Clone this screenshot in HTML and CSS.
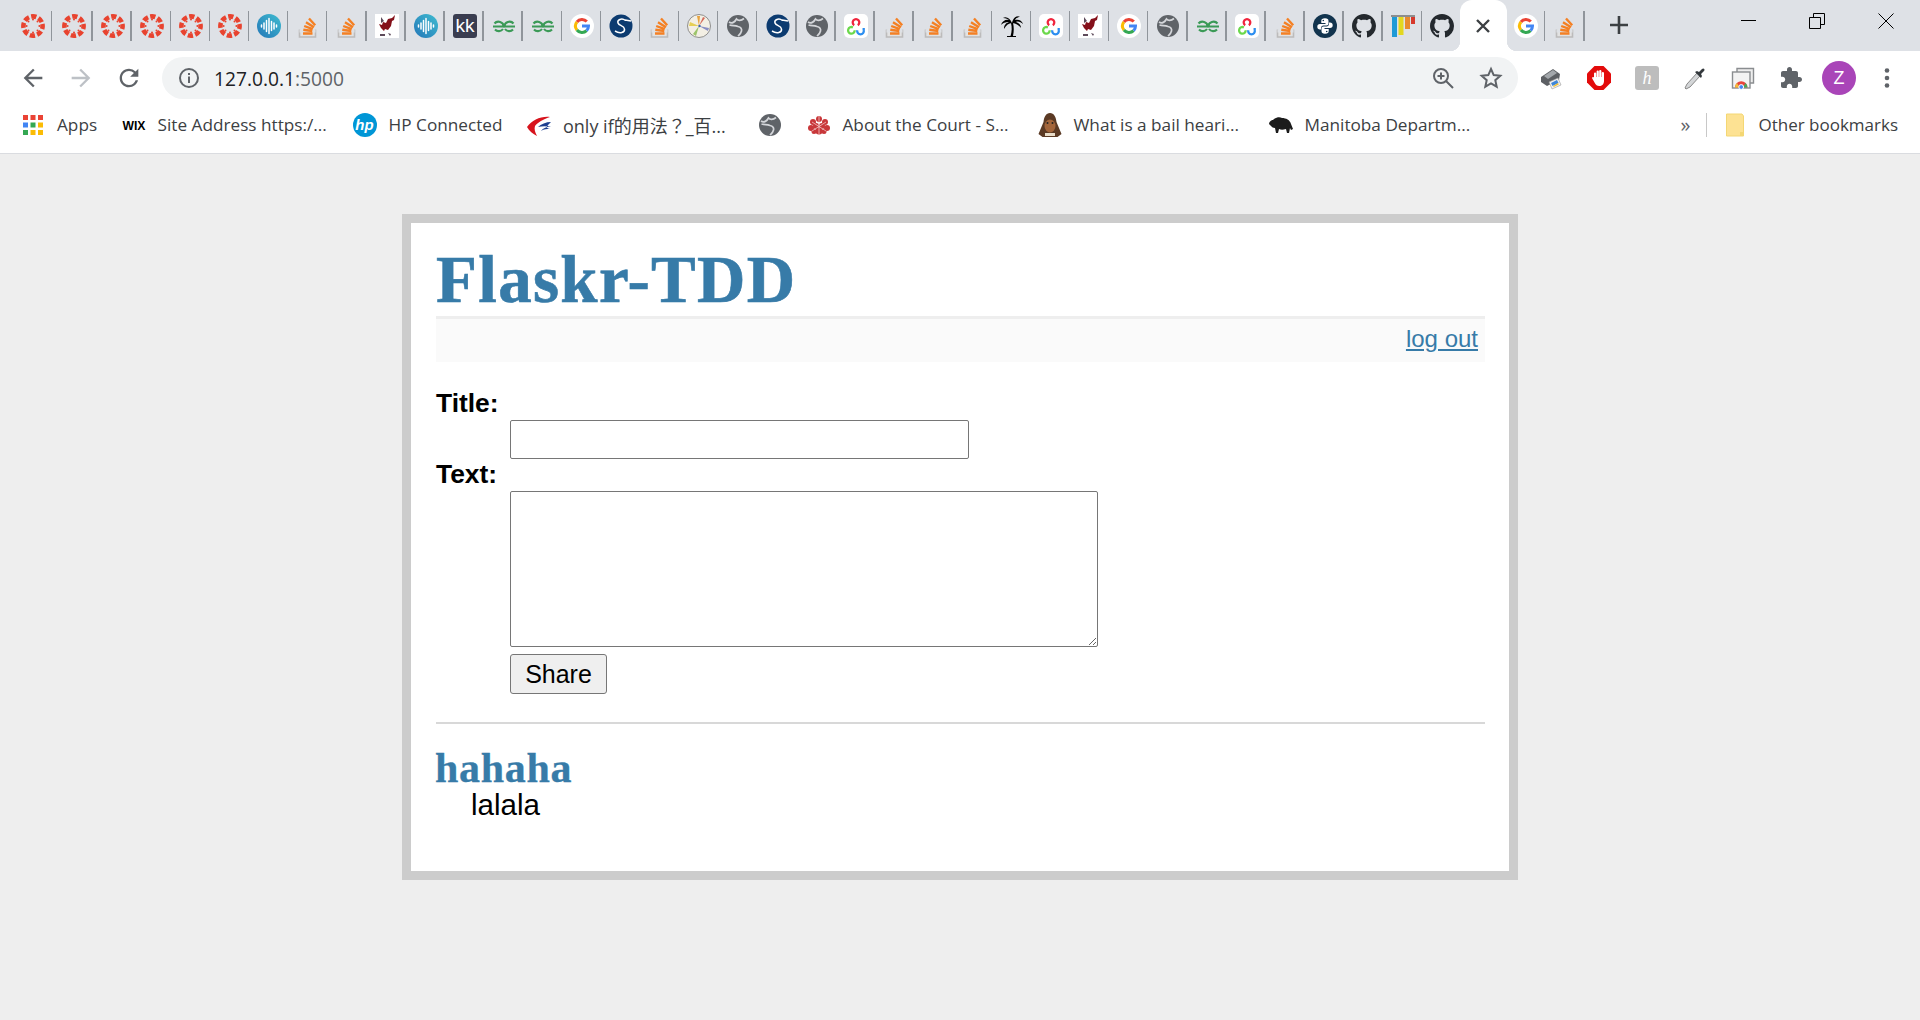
FILE: index.html
```html
<!DOCTYPE html>
<html lang="en">
<head>
    <meta charset="UTF-8">
    <title>Flaskr-TDD</title>
    <link rel="stylesheet" href="styles.css">
</head>
<body>

<svg class="sprites" width="0" height="0">
    <defs>
        <linearGradient id="wave_grad" x1="0" y1="1" x2="1" y2="0">
            <stop offset="0" stop-color="#2477b8"/>
            <stop offset="1" stop-color="#3fbcd0"/>
        </linearGradient>
    </defs>
    <symbol id="i_canvas" viewBox="0 0 24 24">
        <circle cx="12" cy="12" r="9.6" fill="none" stroke="#e8432f" stroke-width="4.6" stroke-dasharray="5.2 2.34" transform="rotate(-12.5 12 12)"/>
        <g fill="#e8432f">
            <circle cx="12" cy="5.6" r="1"/><circle cx="12" cy="18.4" r="1"/><circle cx="5.6" cy="12" r="1"/><circle cx="18.4" cy="12" r="1"/>
            <circle cx="7.5" cy="7.5" r="1"/><circle cx="16.5" cy="7.5" r="1"/><circle cx="7.5" cy="16.5" r="1"/><circle cx="16.5" cy="16.5" r="1"/>
        </g>
    </symbol>
    <symbol id="i_wave" viewBox="0 0 24 24">
        <circle cx="12" cy="12" r="12" fill="url(#wave_grad)"/>
        <path d="M4.5 11v2M7 9v6M9.5 6.5v11M12 4.5v15M14.5 7.5v9M17 9v6M19.5 11v2" stroke="#fff" stroke-width="1.5" stroke-linecap="round"/>
    </symbol>
    <symbol id="i_so" viewBox="0 0 24 24">
        <path d="M3.500 15.500v7.500h16v-7.500" fill="#e2e2e2" stroke="#bcbbbb" stroke-width="1.600"/>
        <rect x="3.500" y="15.500" width="16" height="3" fill="#dee1e6"/>
        <path d="M7 19.500h9.500M7.300 15.800l9 1.200M8.200 12l8.600 3.200M10 8.200l8 5M13 4.500l6.200 6.800" fill="none" stroke="#f48024" stroke-width="2.400"/>
    </symbol>
    <symbol id="i_griffin" viewBox="0 0 24 24">
        <rect width="24" height="24" fill="#fff"/>
        <path d="M20 1l-1 5-2 1-1 5-3 4-3-1-1 2-3-3-2-4 3 1 1-3 3 1 2-4 4-1z" fill="#84101a"/>
        <path d="M6 3l3 4-3 2zM5 20h5v2H5zM13 19l3 1-1 2z" fill="#5d4a5a"/>
    </symbol>
    <symbol id="i_gfg" viewBox="0 0 24 24">
        <g fill="none" stroke="#3b9a57" stroke-width="2.100">
            <path d="M2.500 9.500A5 4.600 0 0 1 11.500 12.500H1M3 15.500A5 4.600 0 0 0 11 15"/>
            <path d="M21.500 9.500A5 4.600 0 0 0 12.500 12.500H23M21 15.500A5 4.600 0 0 1 13 15"/>
        </g>
    </symbol>
    <symbol id="i_g" viewBox="0 0 24 24">
        <circle cx="12" cy="12" r="12" fill="#fff"/>
        <g fill="none" stroke-width="3">
            <path d="M6.900 8A6.500 6.500 0 0 1 16.800 7.600" stroke="#ea4335"/>
            <path d="M6.900 8A6.500 6.500 0 0 0 6.900 16" stroke="#fbbc05"/>
            <path d="M6.900 16A6.500 6.500 0 0 0 16.600 16.600" stroke="#34a853"/>
            <path d="M16.600 16.600A6.500 6.500 0 0 0 18.500 12H12" stroke="#4285f4"/>
        </g>
    </symbol>
    <symbol id="i_scipy" viewBox="0 0 24 24">
        <circle cx="12" cy="12" r="11.500" fill="#0c3b70"/>
        <path d="M16.500 6.500C12.500 3.500 8 6 9 9c1 3 6 2.500 6.500 6 .5 3.500-4.500 5-9.500 2M16 6l6 1" fill="none" stroke="#fff" stroke-width="1.500"/>
    </symbol>
    <symbol id="i_wheel" viewBox="0 0 24 24">
        <circle cx="12" cy="12" r="11.500" fill="#f3efe4" stroke="#777" stroke-width=".8"/>
        <path d="M12 12L10 2l3 0z" fill="#e8a33d"/>
        <path d="M12 12L3 8l-1 4z" fill="#e6cf55"/>
        <path d="M12 12l-6 8 3 2z" fill="#9cc46a"/>
        <path d="M12 12l9 5 1-3z" fill="#8a8fc4"/>
        <path d="M12 12l6-8-2-1z" fill="#d46a5a"/>
        <circle cx="12.500" cy="12" r="1.200" fill="#3a62b0"/>
    </symbol>
    <symbol id="i_globe" viewBox="0 0 24 24">
        <circle cx="12" cy="12" r="11" fill="#5f6368"/>
        <path d="M3 8C6 10 9 8 10.500 5 12 7 15 7 18 4.500M3.500 11C7 12 9 11 12 12.500 15 13 16 15 15.500 17 15 19.500 13 21 12 22" fill="none" stroke="#d4d6da" stroke-width="1.700"/>
    </symbol>
    <symbol id="i_cv" viewBox="0 0 24 24">
        <rect width="24" height="24" rx="5" fill="#fff"/>
        <g fill="none" stroke-width="2.300">
            <path d="M10.200 11.200A3.300 3.300 0 1 1 13.800 11.200" stroke="#f0243c"/>
            <path d="M8.900 13.400A3.300 3.300 0 1 0 10.700 16.300" stroke="#6bd84b"/>
            <path d="M13.300 16.300A3.300 3.300 0 1 0 19.700 16.300M19.700 16.300V14" stroke="#2c8ef0"/>
        </g>
    </symbol>
    <symbol id="i_palm" viewBox="0 0 24 24">
        <path d="M11 9c1 4 1 9-.5 13H7v1h9v-1h-3c1-5 1-9 0-13z"/>
        <path d="M12 9C10 4 6 2 3 4c3 0 5 1 6 2C6 5 2 7 1 11c3-3 6-3 8-3-3 1-5 3-5 7 2-4 5-6 8-6zM12 9c1-5 5-8 8-6-2 0-4 1-5 3 3-1 7 0 8 4-2-2-5-3-7-2 3 1 5 3 5 6-2-3-6-5-9-5z"/>
    </symbol>
    <symbol id="i_python" viewBox="0 0 24 24">
        <circle cx="12" cy="12" r="12" fill="#12344e"/>
        <g id="py_half">
            <path d="M12 4.300C9.300 4.300 8.300 5.300 8.300 7V9H12.500V10H7C5.300 10 4.300 11 4.300 12.700 4.300 14.500 5.300 15.500 7 15.500H8V14C8 12.500 9 11.500 10.500 11.500H13.500C14.800 11.500 15.500 10.800 15.500 9.500V7C15.500 5.300 14.500 4.300 12 4.300Z" fill="#fff"/>
            <circle cx="10.300" cy="6.500" r=".8" fill="#12344e"/>
        </g>
        <use href="#py_half" transform="rotate(180 12 12)"/>
    </symbol>
    <symbol id="i_github" viewBox="0 0 16 16">
        <path fill="#24292e" d="M8 0C3.580 0 0 3.580 0 8c0 3.540 2.290 6.530 5.470 7.590.4.070.55-.17.55-.38 0-.19-.01-.82-.01-1.490-2.010.37-2.530-.49-2.690-.94-.09-.23-.48-.94-.82-1.130-.28-.15-.68-.52-.01-.53.63-.01 1.080.58 1.230.82.72 1.210 1.870.87 2.330.66.07-.52.28-.87.51-1.070-1.780-.2-3.640-.89-3.640-3.950 0-.87.31-1.590.82-2.150-.08-.2-.36-1.020.08-2.120 0 0 .67-.21 2.200.82.64-.18 1.320-.27 2-.27.68 0 1.360.09 2 .27 1.530-1.040 2.200-.82 2.200-.82.44 1.100.16 1.920.08 2.120.51.56.82 1.270.82 2.150 0 3.070-1.870 3.750-3.650 3.950.29.25.54.73.54 1.480 0 1.070-.01 1.930-.01 2.200 0 .21.15.46.55.38A8.013 8.013 0 0016 8c0-4.420-3.580-8-8-8z"/>
    </symbol>
    <symbol id="i_bars" viewBox="0 0 24 24">
        <rect y="1" width="24" height="2" fill="#8e8e8e"/>
        <rect x="1" y="3" width="5" height="20" fill="#1e9ad6"/>
        <rect x="7.500" y="3" width="5" height="18" fill="#e3d71f"/>
        <rect x="14" y="3" width="5" height="12" fill="#e98a2d"/>
        <rect x="20" y="3" width="4" height="7" fill="#d6382b"/>
    </symbol>

    <symbol id="i_back" viewBox="0 0 24 24"><path d="M20 11H7.830l5.590-5.590L12 4l-8 8 8 8 1.410-1.410L7.830 13H20v-2z"/></symbol>
    <symbol id="i_forward" viewBox="0 0 24 24"><path d="M4 11h12.170l-5.590-5.590L12 4l8 8-8 8-1.410-1.410L16.170 13H4v-2z"/></symbol>
    <symbol id="i_reload" viewBox="0 0 24 24"><path d="M17.650 6.350A7.958 7.958 0 0012 4c-4.420 0-7.990 3.580-7.990 8s3.570 8 7.990 8c3.730 0 6.840-2.550 7.730-6h-2.080A5.990 5.990 0 0112 18c-3.310 0-6-2.690-6-6s2.690-6 6-6c1.660 0 3.140.69 4.220 1.780L13 11h7V4l-2.350 2.350z"/></symbol>
    <symbol id="i_puzzle" viewBox="0 0 24 24"><path d="M20.500 11H19V7c0-1.100-.9-2-2-2h-4V3.500C13 2.120 11.880 1 10.500 1S8 2.120 8 3.500V5H4c-1.100 0-1.990.9-1.990 2v3.800H3.500c1.490 0 2.700 1.210 2.700 2.700s-1.210 2.700-2.700 2.700H2V20c0 1.100.9 2 2 2h3.800v-1.500c0-1.490 1.210-2.700 2.700-2.700 1.490 0 2.700 1.210 2.700 2.700V22H17c1.100 0 2-.9 2-2v-4h1.500c1.380 0 2.500-1.120 2.500-2.500S21.880 11 20.500 11z"/></symbol>
</svg>

<div id="tabstrip">
    <div class="tab tab_first"><svg class="fav"><use href="#i_canvas"/></svg></div>
    <div class="tab"><svg class="fav"><use href="#i_canvas"/></svg></div>
    <div class="tab"><svg class="fav"><use href="#i_canvas"/></svg></div>
    <div class="tab"><svg class="fav"><use href="#i_canvas"/></svg></div>
    <div class="tab"><svg class="fav"><use href="#i_canvas"/></svg></div>
    <div class="tab"><svg class="fav"><use href="#i_canvas"/></svg></div>
    <div class="tab"><svg class="fav"><use href="#i_wave"/></svg></div>
    <div class="tab"><svg class="fav"><use href="#i_so"/></svg></div>
    <div class="tab"><svg class="fav"><use href="#i_so"/></svg></div>
    <div class="tab"><svg class="fav"><use href="#i_griffin"/></svg></div>
    <div class="tab"><svg class="fav"><use href="#i_wave"/></svg></div>
    <div class="tab">
        <svg class="fav" viewBox="0 0 24 24">
            <rect width="24" height="24" rx="3" fill="#3a3d50"/>
            <text x="12" y="18" font-family="Liberation Sans, sans-serif" font-size="19" fill="#fff" text-anchor="middle">kk</text>
        </svg>
    </div>
    <div class="tab"><svg class="fav"><use href="#i_gfg"/></svg></div>
    <div class="tab"><svg class="fav"><use href="#i_gfg"/></svg></div>
    <div class="tab"><svg class="fav"><use href="#i_g"/></svg></div>
    <div class="tab"><svg class="fav"><use href="#i_scipy"/></svg></div>
    <div class="tab"><svg class="fav"><use href="#i_so"/></svg></div>
    <div class="tab"><svg class="fav"><use href="#i_wheel"/></svg></div>
    <div class="tab"><svg class="fav"><use href="#i_globe"/></svg></div>
    <div class="tab"><svg class="fav"><use href="#i_scipy"/></svg></div>
    <div class="tab"><svg class="fav"><use href="#i_globe"/></svg></div>
    <div class="tab"><svg class="fav"><use href="#i_cv"/></svg></div>
    <div class="tab"><svg class="fav"><use href="#i_so"/></svg></div>
    <div class="tab"><svg class="fav"><use href="#i_so"/></svg></div>
    <div class="tab"><svg class="fav"><use href="#i_so"/></svg></div>
    <div class="tab"><svg class="fav"><use href="#i_palm"/></svg></div>
    <div class="tab"><svg class="fav"><use href="#i_cv"/></svg></div>
    <div class="tab"><svg class="fav"><use href="#i_griffin"/></svg></div>
    <div class="tab"><svg class="fav"><use href="#i_g"/></svg></div>
    <div class="tab"><svg class="fav"><use href="#i_globe"/></svg></div>
    <div class="tab"><svg class="fav"><use href="#i_gfg"/></svg></div>
    <div class="tab"><svg class="fav"><use href="#i_cv"/></svg></div>
    <div class="tab"><svg class="fav"><use href="#i_so"/></svg></div>
    <div class="tab"><svg class="fav"><use href="#i_python"/></svg></div>
    <div class="tab"><svg class="fav"><use href="#i_github"/></svg></div>
    <div class="tab"><svg class="fav"><use href="#i_bars"/></svg></div>
    <div class="tab tab_nosep"><svg class="fav"><use href="#i_github"/></svg></div>
    <div class="tab tab_active">
        <svg class="fav" viewBox="0 0 24 24"><path d="M6 6l12 12M18 6L6 18" stroke="#3c4043" stroke-width="2.400" fill="none"/></svg>
    </div>
    <div class="tab"><svg class="fav"><use href="#i_g"/></svg></div>
    <div class="tab"><svg class="fav"><use href="#i_so"/></svg></div>
    <svg class="newtab" viewBox="0 0 24 24"><path d="M12 3v18M3 12h18" stroke="#3c4043" stroke-width="2.600" fill="none"/></svg>
    <div id="winctl">
        <svg viewBox="0 0 24 24"><path d="M5 11.500h15" stroke="#000" fill="none"/></svg>
        <svg viewBox="0 0 24 24"><path d="M4.500 8.500h11v11h-11zM8.500 8.500v-4h11v11h-4" stroke="#000" fill="none"/></svg>
        <svg viewBox="0 0 24 24"><path d="M4.500 4.500l15 15M19.500 4.500l-15 15" stroke="#000" fill="none"/></svg>
    </div>
</div>

<div id="toolbar">
    <svg class="btn btn_nav"><use href="#i_back"/></svg>
    <svg class="btn btn_off"><use href="#i_forward"/></svg>
    <svg class="btn btn_nav"><use href="#i_reload"/></svg>
    <div id="omni">
        <svg class="omni_icon" viewBox="0 0 24 24"><circle cx="12" cy="12" r="9" fill="none" stroke="#5f6368" stroke-width="2"/><path d="M12 10.500v6.500M12 7v2" stroke="#5f6368" stroke-width="2"/></svg>
        <span id="url">127.0.0.1<span class="url_port">:5000</span></span>
        <svg class="omni_icon omni_zoom" viewBox="0 0 24 24"><circle cx="10" cy="10" r="7" fill="none" stroke="#5f6368" stroke-width="2"/><path d="M15 15l7 7M10 6.500v7M6.500 10h7" stroke="#5f6368" stroke-width="2" fill="none"/></svg>
        <svg class="omni_icon" viewBox="0 0 24 24"><path d="M12 3l2.700 6.100 6.600.7-5 4.400 1.400 6.500-5.700-3.300-5.700 3.300 1.400-6.500-5-4.400 6.600-.7z" fill="none" stroke="#5f6368" stroke-width="2"/></svg>
    </div>
    <div id="exts">
        <svg class="btn" viewBox="0 0 24 24">
            <path d="M2 11l12-8 7 5-1 6-12 6-6-4z" fill="#5d6064"/>
            <path d="M5 10l9-6 4 3-9 6z" fill="#a3a7ab"/>
            <path d="M10 16l9-4 3 7-9 4z" fill="#f3f3f3" stroke="#999" stroke-width=".6"/>
            <path d="M12 17l6-3 1.500 3-6 3z" fill="#3f86d8"/>
            <path d="M14 20l5-3 .8 1.500-5 2.500z" fill="#f2c037"/>
        </svg>
        <svg class="btn" viewBox="0 0 24 24">
            <path d="M7.500 0h9L24 7.500v9L16.500 24h-9L0 16.500v-9z" fill="#e30b0b"/>
            <path d="M7 13V7.500a1.100 1.100 0 012.200 0V11h.4V5.500a1.100 1.100 0 012.200 0V11h.4V5a1.100 1.100 0 012.200 0v6h.4V7a1.100 1.100 0 012.200 0v8c0 3-2 5-4.700 5-2.300 0-3.500-1-4.500-3l-2.600-4.500c-.5-1 1-2 1.700-1z" fill="#fff"/>
        </svg>
        <svg class="btn" viewBox="0 0 24 24">
            <rect width="24" height="24" rx="3" fill="#bdbdbd"/>
            <text x="12" y="18" font-family="Liberation Serif, serif" font-style="italic" font-size="18" fill="#fff" text-anchor="middle">h</text>
        </svg>
        <svg class="btn" viewBox="0 0 24 24">
            <path d="M14 7l3 3-10 11-4 2-1-1 2-4z" fill="#d4d6d8" stroke="#888" stroke-width="1"/>
            <path d="M12 6l6 6 1-2-1-2 3-3c1.500-1.500-.5-3.500-2-2l-3 3-2-1z" fill="#33383c"/>
        </svg>
        <svg class="btn" viewBox="0 0 24 24">
            <path d="M6 6V2.500h16.500V17H19" fill="#eee" stroke="#8a8d90" stroke-width="1.400"/>
            <rect x="1.500" y="6" width="17.500" height="16" fill="#f3f3f3" stroke="#8a8d90" stroke-width="1.400"/>
            <path d="M4 21.500a6.200 6.200 0 0112.500 0z" fill="#e8453c"/>
            <path d="M4 21.500a6.200 6.200 0 012-4.500l2.500 4.500z" fill="#f2c037"/>
            <path d="M12 21.500l2.500-4.500a6.200 6.200 0 012 4.500z" fill="#4aa657"/>
            <circle cx="10.200" cy="21" r="2.400" fill="#4285f4" stroke="#fff" stroke-width="1"/>
        </svg>
        <svg class="btn btn_nav"><use href="#i_puzzle"/></svg>
        <div class="avatar">Z</div>
        <svg class="btn" viewBox="0 0 24 24"><g fill="#5f6368"><circle cx="12" cy="4.500" r="2.300"/><circle cx="12" cy="12" r="2.300"/><circle cx="12" cy="19.500" r="2.300"/></g></svg>
    </div>
</div>

<div id="bookmarks">
    <div class="bm">
        <svg class="bm_icon" viewBox="0 0 24 24">
            <rect x="2" y="2" width="5" height="5" fill="#ea4335"/><rect x="9.500" y="2" width="5" height="5" fill="#ea4335"/><rect x="17" y="2" width="5" height="5" fill="#ea4335"/>
            <rect x="2" y="9.500" width="5" height="5" fill="#4285f4"/><rect x="9.500" y="9.500" width="5" height="5" fill="#34a853"/><rect x="17" y="9.500" width="5" height="5" fill="#fbbc05"/>
            <rect x="2" y="17" width="5" height="5" fill="#34a853"/><rect x="9.500" y="17" width="5" height="5" fill="#fbbc05"/><rect x="17" y="17" width="5" height="5" fill="#fbbc05"/>
        </svg>
        <span>Apps</span>
    </div>
    <div class="bm bm_long">
        <svg class="bm_icon" viewBox="0 0 24 24"><text x="12" y="16.500" font-family="Liberation Sans, sans-serif" font-weight="700" font-size="13" text-anchor="middle" textLength="23" lengthAdjust="spacingAndGlyphs">WIX</text></svg>
        <span>Site Address https:/...</span>
    </div>
    <div class="bm">
        <svg class="bm_icon" viewBox="0 0 24 24"><circle cx="12" cy="12" r="12" fill="#0096d6"/><text x="11.500" y="17" font-family="Liberation Sans, sans-serif" font-weight="700" font-style="italic" font-size="15" fill="#fff" text-anchor="middle">hp</text></svg>
        <span>HP Connected</span>
    </div>
    <div class="bm bm_long">
        <svg class="bm_icon" viewBox="0 0 24 24">
            <path d="M23 4C14 3 5 7 0 14c2 4 6 7 10 9-2-4-3-7-2-10 3-4 9-7 15-9z" fill="#d7141d"/>
            <path d="M24 9c-5 0-10 2-13 5 4-1 9-1 13-1-4 1-8 2-10 5 3-2 6-2 9-2-3-1-4-1-2-4z" fill="#1d3f8f"/>
        </svg>
        <span class="bm_cjk">only if的用法？_百...</span>
    </div>
    <div class="bm"><svg class="bm_icon"><use href="#i_globe"/></svg></div>
    <div class="bm bm_long">
        <svg class="bm_icon" viewBox="0 0 24 24">
            <g fill="#c8373a">
                <circle cx="12" cy="6" r="3"/><circle cx="6" cy="9" r="3"/><circle cx="18" cy="9" r="3"/><circle cx="4" cy="15" r="3"/><circle cx="20" cy="15" r="3"/><circle cx="9" cy="13" r="3"/><circle cx="15" cy="13" r="3"/><circle cx="12" cy="18" r="3.500"/><circle cx="7" cy="18.500" r="2.500"/><circle cx="17" cy="18.500" r="2.500"/>
            </g>
            <path d="M12 3v18M5 9l14 9M19 9L5 18" stroke="#f3c4c4" stroke-width=".8"/>
        </svg>
        <span>About the Court - S...</span>
    </div>
    <div class="bm bm_long">
        <svg class="bm_icon" viewBox="0 0 24 24">
            <path d="M12 0c4 0 6 4 6.500 9l5 12-4 3H4.500l-4-3 5-12C6 4 8 0 12 0z" fill="#5b3a24"/>
            <ellipse cx="12" cy="13" rx="5.500" ry="6.500" fill="#a3653a"/>
            <path d="M7 20h10v3H7z" fill="#e8dcc8"/>
            <circle cx="9.500" cy="10" r="1" fill="#222"/><circle cx="14.500" cy="10" r="1" fill="#222"/>
        </svg>
        <span>What is a bail heari...</span>
    </div>
    <div class="bm">
        <svg class="bm_icon" viewBox="0 0 24 24">
            <path d="M0 11c0-2 2-4 4-4l1-1c3-2 6-2 8-1 4 0 8 2 9 6l2 5-2 1-1-2-1 5h-2l-1-4c-3 1-5 1-7 0l-1 4H7l-1-5c-2 0-3-1-4-2z" fill="#1b1b1b"/>
        </svg>
        <span>Manitoba Departm...</span>
    </div>
    <div id="bm_more">»</div>
    <div id="bm_sep"></div>
    <div class="bm bm_other">
        <svg class="bm_icon" viewBox="0 0 24 24"><path d="M3.500 1h15.500l1.500 2v20h-17z" fill="#fde293" stroke="#f4d774" stroke-width="1"/><path d="M17 19h3.500v4H17z" fill="#f4d774"/></svg>
        <span>Other bookmarks</span>
    </div>
</div>

<div class="page">
    <h1>Flaskr-TDD</h1>
    <div class="metanav"><a href="#">log out</a></div>
    <form class="add_entry">
        <dl>
            <dt>Title:</dt>
            <dd><input type="text" class="f_title"></dd>
            <dt>Text:</dt>
            <dd><textarea class="f_text"></textarea></dd>
            <dd><input type="submit" class="f_share" value="Share"></dd>
        </dl>
    </form>
    <ul class="entries">
        <li>
            <h2>hahaha</h2>
            <p>lalala</p>
        </li>
    </ul>
</div>

</body>
</html>
```

FILE: styles.css
```css
*{
    padding: 0;
    margin: 0;
    list-style: none;
    box-sizing: border-box;
}
body{
    background-color: #eee;
    font-family: "Liberation Sans", Arial, sans-serif;
    overflow: hidden;
}
.sprites{
    position: absolute;
}

/* tab strip */
#tabstrip{
    display: flex;
    height: 51px;
    padding-left: 13.9px;
    background-color: #dee1e6;
}
.tab{
    position: relative;
    flex: none;
    width: 39.1px;
    display: flex;
    align-items: center;
    justify-content: center;
}
.tab_first{
    margin-right: 1.3px;
}
.tab::after{
    content: "";
    position: absolute;
    right: 0.5px;
    top: 11px;
    bottom: 10px;
    width: 1.5px;
    background-color: #90959b;
}
.tab_nosep::after{
    display: none;
}
.fav{
    width: 24px;
    height: 24px;
}
.tab_active{
    width: 47.2px;
    margin-left: -2px;
    background-color: #fff;
    border-radius: 12px 12px 0 0;
}
.tab_active::before,
.tab_active::after{
    content: "";
    position: absolute;
    top: auto;
    bottom: 0;
    width: 10px;
    height: 10px;
    background-color: transparent;
}
.tab_active::before{
    left: -10px;
    right: auto;
    background-image: radial-gradient(circle at 0 0, transparent 10px, #fff 10.5px);
}
.tab_active::after{
    left: auto;
    right: -10px;
    background-image: radial-gradient(circle at 100% 0, transparent 10px, #fff 10.5px);
}
.newtab{
    flex: none;
    width: 24px;
    height: 24px;
    margin: 13px 0 0 22px;
}
#winctl{
    margin-left: auto;
    padding: 9px 22px 0 0;
    display: flex;
    align-items: flex-start;
    gap: 45px;
}
#winctl svg{
    width: 24px;
    height: 24px;
}

/* toolbar */
#toolbar{
    display: flex;
    align-items: center;
    gap: 20px;
    height: 52px;
    padding: 6px 19px 4px;
    background-color: #fff;
}
.btn{
    flex: none;
    width: 28px;
    height: 28px;
}
.btn_nav{
    fill: #5f6368;
}
.btn_off{
    fill: #bdc1c6;
}
#omni{
    flex: 1;
    height: 42px;
    margin-left: -1px;
    margin-right: -1px;
    padding: 0 15px;
    display: flex;
    align-items: center;
    gap: 13px;
    background-color: #f1f3f4;
    border-radius: 21px;
}
.omni_icon{
    flex: none;
    width: 24px;
    height: 24px;
}
.omni_zoom{
    margin-left: auto;
    margin-right: 11px;
}
#url{
    font-family: "Open Sans", sans-serif;
    font-size: 19.2px;
    color: #202124;
}
.url_port{
    color: #5f6368;
}
#exts{
    display: flex;
    align-items: center;
    gap: 20px;
}
#exts .btn{
    width: 24px;
    height: 24px;
    margin: 0 2px;
}
.avatar{
    flex: none;
    width: 34px;
    height: 34px;
    margin: 0 -3px;
    border-radius: 50%;
    background-color: #a945b8;
    color: #fff;
    font-size: 18px;
    line-height: 34px;
    text-align: center;
}

/* bookmarks bar */
#bookmarks{
    display: flex;
    align-items: center;
    gap: 24.5px;
    height: 51px;
    padding: 0 22px 7px 21px;
    background-color: #fff;
    border-bottom: 1px solid #dadce0;
    font-family: "Open Sans", "Noto Sans CJK TC", sans-serif;
    font-size: 17.2px;
    color: #3c4043;
}
.bm{
    flex: none;
    display: flex;
    align-items: center;
    gap: 12px;
    white-space: nowrap;
}
.bm_long{
    width: 206.5px;
}
.bm_cjk{
    font-size: 18px;
}
.bm_icon{
    flex: none;
    width: 24px;
    height: 24px;
}
#bm_more{
    margin-left: auto;
    font-size: 20px;
    color: #5f6368;
}
#bm_sep{
    width: 1px;
    height: 24px;
    margin-left: -8.5px;
    background-color: #c8c8c8;
}
.bm_other{
    margin-left: -8.5px;
    gap: 11px;
    font-size: 17px;
}

/* page */
.page{
    width: 1116px;
    margin: 60px auto 0;
    padding: 25px 24px 0 25px;
    border: 9px solid #ccc;
    background-color: #fff;
}
h1{
    height: 71px;
    border-bottom: 3px solid #eee;
    font-family: "Liberation Serif", serif;
    font-size: 67px;
    font-weight: 700;
    line-height: 62px;
    letter-spacing: 1.3px;
    color: #377ba8;
    -webkit-text-stroke: 0.6px #377ba8;
}
.metanav{
    height: 43px;
    padding-right: 7px;
    background-color: #fafafa;
    font-size: 24px;
    line-height: 39px;
    text-align: right;
}
.metanav a{
    color: #377ba8;
}
.add_entry{
    padding: 26px 0 28px;
    border-bottom: 2px solid #d8d8d8;
}
dt{
    height: 30px;
    font-size: 26.4px;
    font-weight: 700;
    line-height: 30px;
}
dd{
    margin-left: 74px;
}
.f_title,
.f_text,
.f_share{
    display: block;
    margin-top: 2px;
    border: 1px solid #767676;
    border-radius: 2px;
    background-color: #fff;
}
.f_title{
    width: 459px;
    height: 39px;
}
.f_text{
    width: 588px;
    height: 156px;
}
.f_share{
    width: 97px;
    height: 40px;
    margin-top: 7px;
    background-color: #efefef;
    font-family: "Liberation Sans", Arial, sans-serif;
    font-size: 25px;
    color: #000;
    border-radius: 3px;
}
.entries{
    height: 147px;
    padding-top: 22px;
}
h2{
    margin-left: -1px;
    font-family: "Liberation Serif", serif;
    font-size: 42px;
    font-weight: 700;
    line-height: 44px;
    letter-spacing: 0.7px;
    color: #377ba8;
    -webkit-text-stroke: 0.3px #377ba8;
}
.entries p{
    margin-left: 35px;
    font-size: 29.5px;
    line-height: 30px;
}
```
